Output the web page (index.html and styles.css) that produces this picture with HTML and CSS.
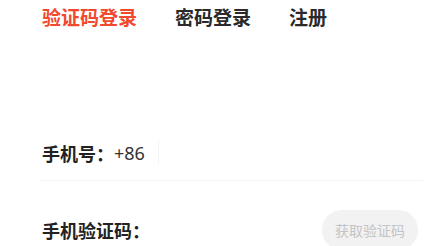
FILE: index.html
```html
<!DOCTYPE html>
<html lang="zh">
<head>
<meta charset="utf-8">
<link rel="stylesheet" href="styles.css">
</head>
<body>
<div class="page">
  <nav class="tabs">
    <span class="tab active">验证码登录</span>
    <span class="tab">密码登录</span>
    <span class="tab">注册</span>
  </nav>
  <form class="form">
    <div class="row phone">
      <span class="label">手机号：</span>
      <span class="prefix">+86</span>
      <span class="divider"></span>
    </div>
    <div class="row code">
      <span class="label">手机验证码：</span>
      <button type="button" class="send">获取验证码</button>
    </div>
  </form>
</div>
</body>
</html>
```
FILE: styles.css
```css
html, body {
  margin: 0;
  padding: 0;
  background: #ffffff;
}
.page {
  font-family: "Noto Sans CJK SC", "Noto Sans", sans-serif;
  color: #222222;
  padding: 0 12px 0 42px;
}
.tabs {
  display: flex;
  gap: 38px;
  height: 32px;
  align-items: center;
}
.tab {
  font-size: 19px;
  font-weight: 700;
  line-height: 1;
  color: #2a2a2a;
}
.tab.active {
  color: #f2492e;
}
.form {
  margin: 108px 0 0 -2px;
}
.row {
  display: flex;
  align-items: center;
  padding-left: 2px;
}
.phone {
  height: 25px;
  padding-bottom: 15px;
  border-bottom: 1px solid #f4f4f4;
}
.label {
  font-size: 18px;
  font-weight: 700;
  line-height: 1;
  color: #222222;
}
.prefix {
  font-family: "Noto Sans", sans-serif;
  font-size: 18px;
  line-height: 1;
  color: #333333;
}
.divider {
  width: 1px;
  height: 25px;
  background: #f4f4f4;
  margin-left: 13px;
}
.code {
  margin-top: 29px;
  justify-content: space-between;
  height: 40px;
}
.send {
  width: 96px;
  height: 40px;
  margin-right: 5px;
  border: none;
  border-radius: 20px;
  background: #f2f2f2;
  color: #c4c4c4;
  font-family: "Noto Sans CJK SC", sans-serif;
  font-size: 14px;
  padding: 0;
}
```
